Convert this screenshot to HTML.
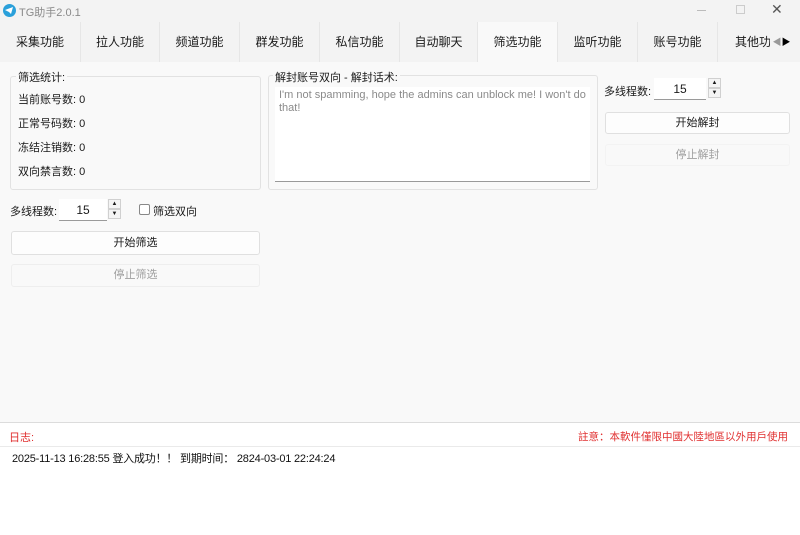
<!DOCTYPE html>
<html><head><meta charset="utf-8"><style>
*{box-sizing:border-box;margin:0;padding:0}
body{width:800px;height:535px;position:relative;overflow:hidden;background:#f9f9f9;font-family:"Liberation Sans","Noto Sans CJK SC",sans-serif;font-size:12px;color:#1a1a1a}
.a{position:absolute}
.tab{position:absolute;top:22px;height:40px;line-height:40px;text-align:center;font-size:12px;background:#f3f3f3;border-right:1px solid #e6e6e6}
.btn{position:absolute;background:#fdfdfd;border:1px solid #e0e0e0;border-radius:3px;text-align:center;font-size:11px}
.dis{background:#f9f9f9;border:1px solid #eeeeee;color:#a0a0a0}
.spin{position:absolute;height:22px;border-bottom:1px solid #9a9a9a;background:#fff;font-size:12px;line-height:22px;text-align:center}
.arr{position:absolute;width:13px;height:10px;border:1px solid #d0d0d0;background:#f4f4f4;font-size:6px;line-height:8px;text-align:center}
</style></head><body>
<div class="a" style="left:0;top:0;width:800px;height:22px;background:#f3f3f3"></div>
<div class="a" style="left:3px;top:4px;width:13px;height:13px;border-radius:50%;background:#2aa0da"></div>
<svg class="a" style="left:5px;top:7px" width="9" height="7"><path d="M0 3 L8 0 L6 7 L4 5 Z" fill="#fff"/></svg>
<div class="a" style="left:19px;top:4px;font-size:11px;color:#8a8a8a">TG助手2.0.1</div>
<div class="a" style="left:697px;top:10px;width:9px;height:1px;background:#bbb"></div>
<div class="a" style="left:736px;top:5px;width:9px;height:9px;border:1px solid #ccc"></div>
<div class="a" style="left:771px;top:1px;font-size:14px;color:#555">✕</div>
<div class="tab" style="left:0;width:81px">采集功能</div>
<div class="tab" style="left:81px;width:79px">拉人功能</div>
<div class="tab" style="left:160px;width:80px">频道功能</div>
<div class="tab" style="left:240px;width:80px">群发功能</div>
<div class="tab" style="left:320px;width:80px">私信功能</div>
<div class="tab" style="left:400px;width:78px">自动聊天</div>
<div class="tab" style="left:478px;width:80px;background:#f9f9f9">筛选功能</div>
<div class="tab" style="left:558px;width:80px">监听功能</div>
<div class="tab" style="left:638px;width:80px">账号功能</div>
<div class="tab" style="left:718px;width:62px;text-align:left;padding-left:17px;overflow:hidden;white-space:nowrap">其他功能</div>
<div class="a" style="left:770px;top:22px;width:30px;height:40px;background:#f3f3f3;font-size:9px;line-height:40px;color:#999">&nbsp;◀<span style="color:#000">▶</span></div>
<div class="a" style="left:10px;top:76px;width:251px;height:114px;border:1px solid #e2e2e2;border-radius:3px"></div>
<div class="a" style="left:16px;top:69px;background:#f9f9f9;padding:0 2px;font-size:11px">筛选统计:</div>
<div class="a" style="left:18px;top:91px;font-size:11px">当前账号数: 0</div>
<div class="a" style="left:18px;top:115px;font-size:11px">正常号码数: 0</div>
<div class="a" style="left:18px;top:139px;font-size:11px">冻结注销数: 0</div>
<div class="a" style="left:18px;top:163px;font-size:11px">双向禁言数: 0</div>
<div class="a" style="left:10px;top:203px;font-size:11px">多线程数:</div>
<div class="spin" style="left:59px;top:199px;width:48px">15</div>
<div class="arr" style="left:108px;top:199px">▲</div><div class="arr" style="left:108px;top:209px">▼</div>
<div class="a" style="left:139px;top:204px;width:11px;height:11px;border:1px solid #888;border-radius:2px;background:#fff"></div>
<div class="a" style="left:153px;top:203px;font-size:11px">筛选双向</div>
<div class="btn" style="left:11px;top:231px;width:249px;height:24px;line-height:22px">开始筛选</div>
<div class="btn dis" style="left:11px;top:264px;width:249px;height:23px;line-height:21px">停止筛选</div>
<div class="a" style="left:268px;top:75px;width:330px;height:115px;border:1px solid #e2e2e2;border-radius:3px"></div>
<div class="a" style="left:273px;top:69px;background:#f9f9f9;padding:0 2px;font-size:11px">解封账号双向 - 解封话术:</div>
<div class="a" style="left:275px;top:87px;width:315px;height:95px;background:#fff;border-bottom:1px solid #999;padding:2px 4px;font-size:11px;color:#8a8a8a;line-height:13px">I'm not spamming, hope the admins can unblock me! I won't do that!</div>
<div class="a" style="left:604px;top:83px;font-size:11px">多线程数:</div>
<div class="spin" style="left:654px;top:78px;width:52px">15</div>
<div class="arr" style="left:708px;top:78px">▲</div><div class="arr" style="left:708px;top:88px">▼</div>
<div class="btn" style="left:605px;top:112px;width:185px;height:22px;line-height:20px">开始解封</div>
<div class="btn dis" style="left:605px;top:144px;width:185px;height:22px;line-height:20px;border-color:#f3f3f3">停止解封</div>
<div class="a" style="left:0;top:422px;width:800px;height:113px;background:#fff;border-top:1px solid #dcdcdc"></div>
<div class="a" style="left:9px;top:429px;font-size:11px;color:#e03030">日志:</div>
<div class="a" style="right:12px;top:429px;font-size:10.5px;color:#e03030">註意：本軟件僅限中國大陸地區以外用戶使用</div>
<div class="a" style="left:0;top:446px;width:800px;height:1px;background:#eaeaea"></div>
<div class="a" style="left:12px;top:450px;font-size:11px;letter-spacing:-0.2px;color:#111">2025-11-13 16:28:55 登入成功！！ 到期时间： 2824-03-01 22:24:24</div>
</body></html>
